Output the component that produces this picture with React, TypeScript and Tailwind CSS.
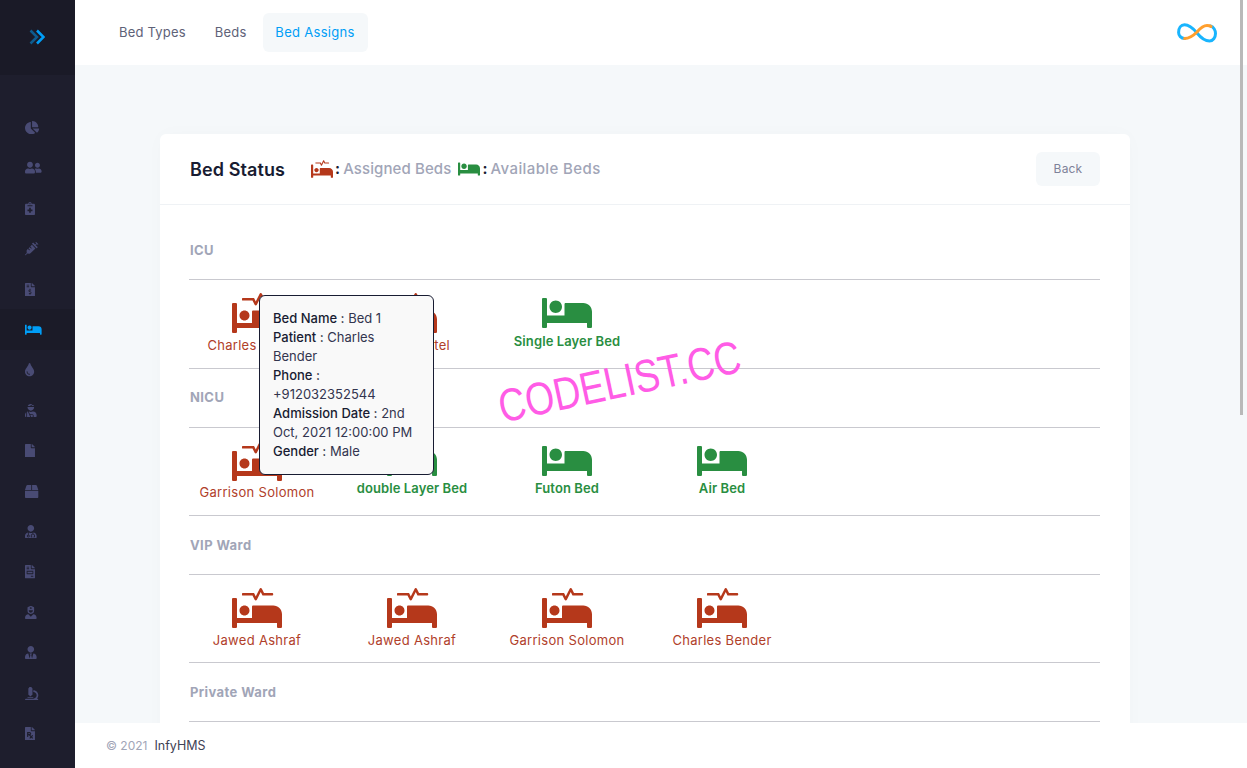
import {
  FaBed,
  FaBox,
  FaChartPie,
  FaFile,
  FaFileInvoice,
  FaFileInvoiceDollar,
  FaFilePrescription,
  FaMicroscope,
  FaNotesMedical,
  FaProcedures,
  FaSyringe,
  FaTint,
  FaUserFriends,
  FaUserInjured,
  FaUserMd,
  FaUserNurse,
  FaUserTie,
} from "react-icons/fa"

const NAV_ICONS = [
  FaChartPie,
  FaUserFriends,
  FaNotesMedical,
  FaSyringe,
  FaFileInvoiceDollar,
  FaBed,
  FaTint,
  FaUserInjured,
  FaFile,
  FaBox,
  FaUserMd,
  FaFileInvoice,
  FaUserNurse,
  FaUserTie,
  FaMicroscope,
  FaFilePrescription,
]

const WARDS = [
  {
    name: "ICU",
    beds: [
      { label: "Charles Bender", taken: true },
      { label: "Nilesh Patel", taken: true },
      { label: "Single Layer Bed", taken: false },
    ],
  },
  {
    name: "NICU",
    beds: [
      { label: "Garrison Solomon", taken: true },
      { label: "double Layer Bed", taken: false },
      { label: "Futon Bed", taken: false },
      { label: "Air Bed", taken: false },
    ],
  },
  {
    name: "VIP Ward",
    beds: [
      { label: "Jawed Ashraf", taken: true },
      { label: "Jawed Ashraf", taken: true },
      { label: "Garrison Solomon", taken: true },
      { label: "Charles Bender", taken: true },
    ],
  },
  { name: "Private Ward", beds: [] },
]

function Sidebar() {
  return (
    <aside className="w-[75px] h-screen flex-shrink-0 bg-[#1e1e2d] flex flex-col">
      <div className="h-[75px] bg-[#1a1a27] flex items-center pl-[29px] pb-[1px]">
        <svg width="16" height="16" viewBox="0 0 16 16" fill="none" strokeWidth="2.5">
          <path d="M1.500 1.500 8 8l-6.500 6.500" stroke="#009ef7" strokeOpacity="0.5" />
          <path d="M8 1.500 14.500 8 8 14.500" stroke="#009ef7" />
        </svg>
      </div>
      <nav className="pt-[32.500px] flex flex-col">
        {NAV_ICONS.map((Icon, i) => (
          <div
            key={i}
            className={
              i === 5
                ? "h-[40.4px] pl-[25px] flex items-center bg-[#1b1b28] text-[#009ef7]"
                : "h-[40.4px] pl-[25px] flex items-center text-[#494b74]"
            }
          >
            <Icon className="h-[13.300px] w-[17px]" preserveAspectRatio="xMinYMid meet" />
          </div>
        ))}
      </nav>
    </aside>
  )
}

function TopBar() {
  return (
    <header className="h-[65px] bg-white flex items-center pl-[30px] pr-[30px] flex-shrink-0">
      <a className="px-[14px] text-[13px] tracking-[0.2px] text-[#5e6278]">Bed Types</a>
      <a className="px-[15px] text-[13px] tracking-[0.2px] text-[#5e6278]">Beds</a>
      <a className="h-[39px] w-[105px] ml-[1px] flex items-center justify-center rounded-md bg-[#f5f8fa] text-[13px] tracking-[0.3px] text-[#009ef7]">
        Bed Assigns
      </a>
      <svg className="ml-auto" width="40" height="20" viewBox="0 0 40 20" fill="none" strokeWidth="3" strokeLinecap="round">
        <path d="M20 10C15 4 11 1.800 7.500 1.800 4 1.800 1.600 5 1.600 9.500c0 3 2.400 6 6 6" stroke="#19b5fe" />
        <path d="M20 10c4 5 8 8 12.500 8 3.500 0 6-3.500 6-7.500 0-3-1.800-6.500-5-7.500" stroke="#19b5fe" />
        <path d="M7.600 15.500C12.500 15.500 16 13 20 9c3-3.500 6.500-6.500 10-6.500 2 0 3 .2 4 1" stroke="#ff9f2e" />
      </svg>
    </header>
  )
}

function BedCell({ label, taken }: { label: string; taken: boolean }) {
  const Icon = taken ? FaProcedures : FaBed
  return (
    <div className="w-[155px] flex flex-col items-center">
      <Icon className={taken ? "w-[50px] h-[40px] text-[#b5381b]" : "w-[50px] h-[40px] text-[#298e41]"} />
      {taken ? (
        <p className="mt-[1.500px] text-[13px] leading-[20px] tracking-[0.3px] text-[#b0402a]">{label}</p>
      ) : (
        <p className="-mt-[2.500px] text-[13px] leading-[20px] font-semibold tracking-[0.1px] text-[#298e41]">{label}</p>
      )}
    </div>
  )
}

function Ward({ name, beds }: { name: string; beds: { label: string; taken: boolean }[] }) {
  return (
    <section>
      <div className="h-[57.500px] pt-[0.5px] pl-[1px] flex items-center border-b border-[#c9c9cf] box-content">
        <h4 className="text-[13px] font-bold tracking-[0.4px] text-[#a1a5b7]">{name}</h4>
      </div>
      <div className="h-[87.330px] pt-[13px] -ml-[9.500px] flex items-start">
        {beds.map((bed, i) => (
          <BedCell key={i} label={bed.label} taken={bed.taken} />
        ))}
      </div>
      <div className="border-b border-[#c9c9cf]" />
    </section>
  )
}

function BedStatusCard() {
  return (
    <div className="relative w-[970px] ml-[85px] mt-[69px] bg-white rounded-md shadow-[0_0_20px_0_rgba(76,87,125,0.02)]">
      <div className="h-[71px] px-[30px] flex items-center border-b border-[#eff2f5]">
        <h3 className="text-[18px] font-semibold text-[#181c32] tracking-[0.1px]">Bed Status</h3>
        <div className="ml-[26px] flex items-center text-[#a1a5b7] text-[15px] font-medium tracking-[0.1px]">
          <FaProcedures className="w-[22px] h-[18px] text-[#b5381b]" />
          <b className="ml-[2px] mr-[3px] text-[#181c32]">:</b>
          <span>Assigned Beds</span>
          <FaBed className="ml-[7px] w-[22px] h-[18px] text-[#298e41]" />
          <b className="ml-[2px] mr-[3px] text-[#181c32]">:</b>
          <span className="tracking-[0.4px]">Available Beds</span>
        </div>
        <button className="ml-auto w-[64px] h-[34px] rounded-md bg-[#f5f8fa] text-[12px] tracking-[0.2px] text-[#7e8299]">
          Back
        </button>
      </div>
      <div className="pl-[29px] pr-[30px] pt-[16.400px]">
        {WARDS.map((ward) => (
          <Ward key={ward.name} name={ward.name} beds={ward.beds} />
        ))}
      </div>
      {/* tooltip over first bed */}
      <div className="absolute left-[99px] top-[161px] w-[175px] rounded-md border border-[#181c32] bg-[#f9f9f9] px-[13px] py-[13px] text-[13px] leading-[19px] text-[#33354f]">
        <p><span className="font-medium text-[#181c32]">Bed Name :</span> Bed 1</p>
        <p><span className="font-medium text-[#181c32]">Patient :</span> Charles Bender</p>
        <p><span className="font-medium text-[#181c32]">Phone :</span> +912032352544</p>
        <p><span className="font-medium text-[#181c32]">Admission Date :</span> 2nd Oct, 2021 12:00:00 PM</p>
        <p><span className="font-medium text-[#181c32]">Gender :</span> Male</p>
      </div>
    </div>
  )
}

export default function App() {
  return (
    <div
      className="relative flex h-screen overflow-hidden bg-[#f5f8fa]"
      style={{ fontFamily: "Inter, 'Open Sans', sans-serif" }}
    >
      <Sidebar />
      <div className="flex-1 min-w-0 flex flex-col">
        <TopBar />
        <main className="flex-1 min-h-0 overflow-hidden">
          <BedStatusCard />
        </main>
        <footer className="h-[45px] pt-[1px] bg-white flex items-center pl-[31px] flex-shrink-0">
          <span className="text-[12px] text-[#a1a5b7]">© 2021</span>
          <span className="ml-[7px] text-[12.500px] text-[#3f4254]">InfyHMS</span>
        </footer>
      </div>
      <div className="absolute top-0 left-[1240px] w-[3px] h-[415px] bg-[#b9b9b9]" />
      <div
        className="absolute left-[499px] top-[384px] origin-left -rotate-[12deg] scale-x-[0.81] text-[46px] leading-none text-[#ff5ce6] whitespace-nowrap"
        style={{ fontFamily: "'Liberation Sans', sans-serif" }}
      >
        CODELIST.CC
      </div>
    </div>
  )
}
